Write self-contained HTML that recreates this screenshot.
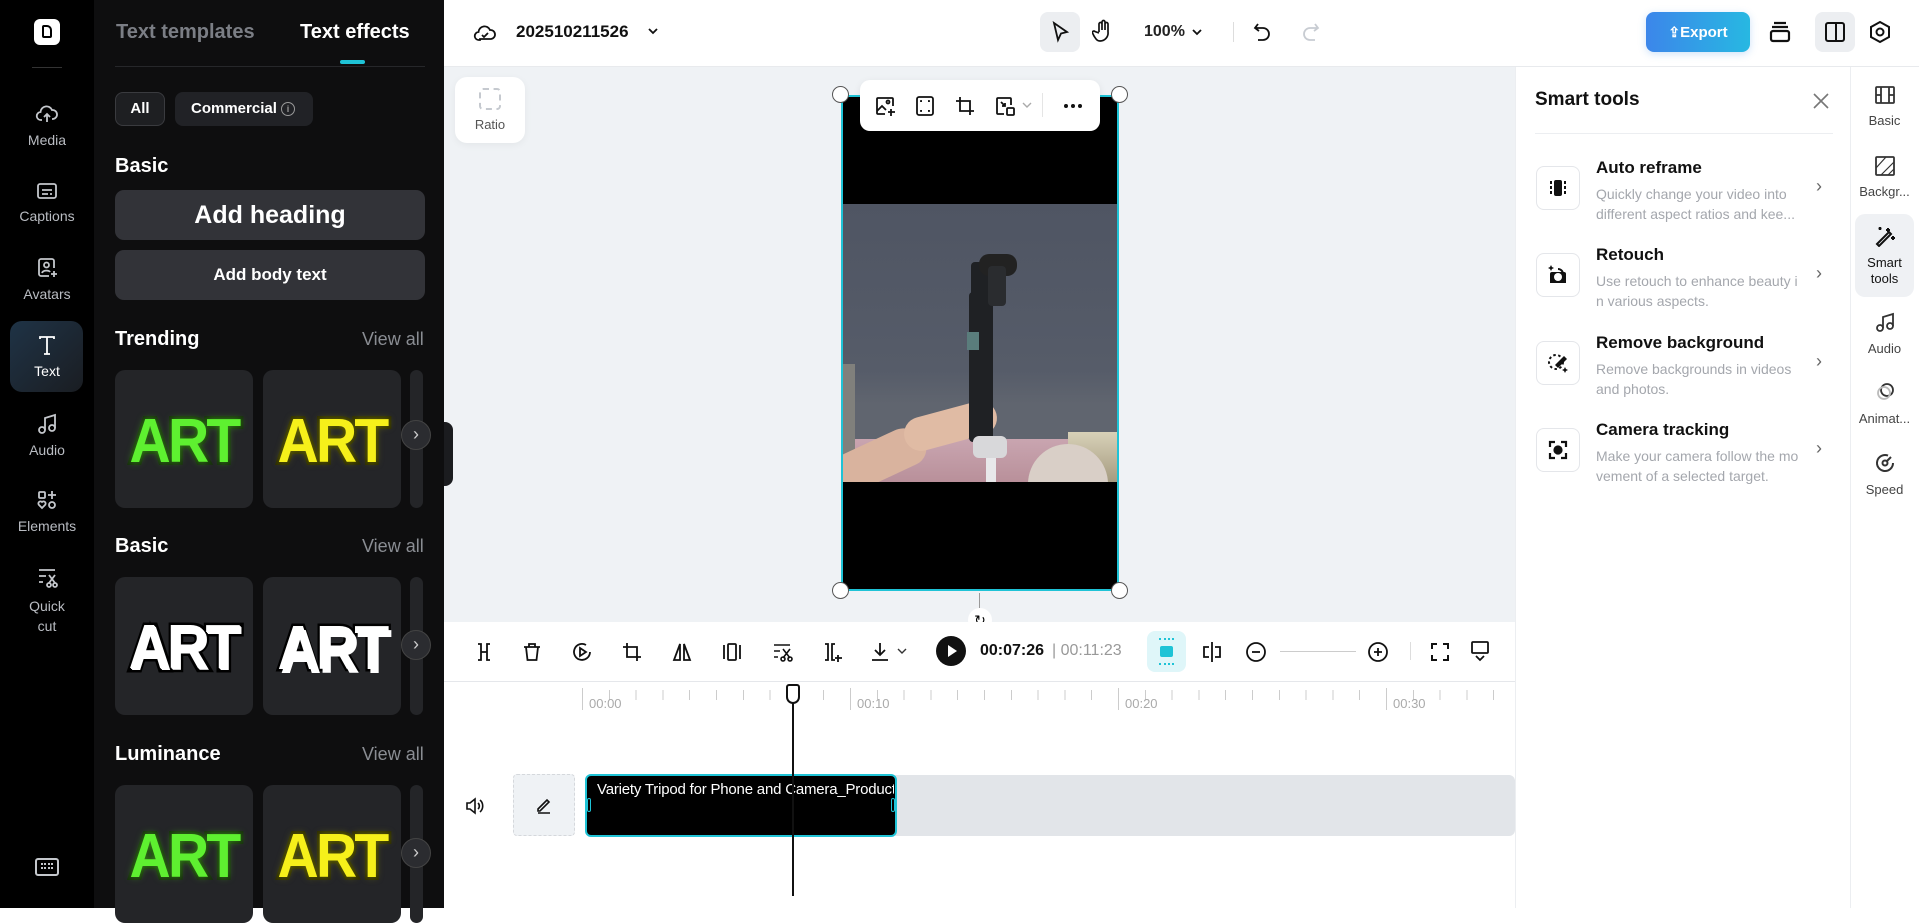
<!DOCTYPE html>
<html><head><meta charset="utf-8"><style>
*{box-sizing:border-box;margin:0;padding:0}
body{width:1919px;height:908px;overflow:hidden;font-family:"Liberation Sans",sans-serif;background:#fff;position:relative}
.a{position:absolute}
.nav{left:0;top:0;width:94px;height:908px;background:#000}
.ni{position:absolute;left:0;width:94px;text-align:center;color:#b9bcc2;font-size:14px}
.ni svg{display:block;margin:0 auto 6px}
.panel{left:94px;top:0;width:350px;height:908px;background:#0e0e0f}
.card{position:absolute;width:138px;height:138px;background:#242528;border-radius:10px;overflow:hidden}
.art{position:absolute;left:0;right:0;top:36px;text-align:center;font-size:62px;font-weight:bold;letter-spacing:-3px;font-family:"Liberation Sans",sans-serif;paint-order:stroke fill;transform:scaleX(.92)}
.g{color:#5ef030;-webkit-text-stroke:6px #17300c;text-shadow:0 0 8px #3c8a20}
.y{color:#f6f01a;-webkit-text-stroke:6px #2e2e00;text-shadow:0 0 8px #6a6a10}
.w1{color:#fff;-webkit-text-stroke:7px #000;text-shadow:0 0 0 #fff,1px 1px 0 #fff,-1px -1px 0 #fff}
.w2{color:#fff;-webkit-text-stroke:5px #000;text-shadow:3px 4px 0 #fff}
.arr{position:absolute;left:401px;width:30px;height:30px;border-radius:50%;background:#2b2c30;border:1px solid #444;color:#ccc;text-align:center;line-height:27px;font-size:18px}
.hd{position:absolute;left:115px;color:#fff;font-weight:bold;font-size:20px}
.va{position:absolute;right:21px;color:#8a8d93;font-size:18px}
.ti{position:absolute;left:1515px;width:335px;height:88px}
.ib{position:absolute;left:21px;top:0;width:44px;height:44px;border:1px solid #e4e6ea;border-radius:8px;display:flex;align-items:center;justify-content:center}
.tt{position:absolute;left:81px;top:-8px;font-size:17px;font-weight:bold;color:#111}
.td{position:absolute;left:81px;top:18px;width:210px;font-size:14px;line-height:20px;color:#a4a7ad}
.ch{position:absolute;left:301px;top:10px;color:#666;font-size:18px}
.ri{position:absolute;left:1850px;width:69px;text-align:center;font-size:13px;color:#444}
.ri svg{display:block;margin:0 auto 8px}
.tb svg{position:absolute;top:641px}
</style></head><body>
<div class="a nav">
 <div class="a" style="left:34px;top:19px;width:26px;height:26px;background:#fff;border-radius:6px"><div class="a" style="left:8px;top:6px;width:10px;height:13px;border:2.5px solid #000;border-radius:2px 5px 2px 2px"></div></div>
 <div class="a" style="left:32px;top:67px;width:30px;height:1px;background:#333"></div>
 <div class="ni" style="top:102px"><svg width="24" height="24" viewBox="0 0 24 24" fill="none" stroke="#c4c7cc" stroke-width="1.8"><path d="M7 18H6a4 4 0 0 1-.5-8A6 6 0 0 1 17 8a4.5 4.5 0 0 1 1 9h-1M12 20v-8M9 15l3-3 3 3"/></svg>Media</div>
 <div class="ni" style="top:180px"><svg width="24" height="22" viewBox="0 0 24 22" fill="none" stroke="#c4c7cc" stroke-width="1.8"><rect x="3" y="4" width="18" height="14" rx="2"/><path d="M7 10h10M7 14h6M15 14h2"/></svg>Captions</div>
 <div class="ni" style="top:256px"><svg width="24" height="24" viewBox="0 0 24 24" fill="none" stroke="#c4c7cc" stroke-width="1.8"><path d="M14 20H6a2 2 0 0 1-2-2V5a2 2 0 0 1 2-2h11a2 2 0 0 1 2 2v7"/><circle cx="11.5" cy="9" r="2.5"/><path d="M7 17c1-3 7-3 8-1M19 15v6M16 18h6"/></svg>Avatars</div>
 <div class="a" style="left:10px;top:321px;width:73px;height:71px;border-radius:12px;background:linear-gradient(135deg,#1f3346,#1a1d22)"></div>
 <div class="ni" style="top:333px;color:#fff"><svg width="24" height="24" viewBox="0 0 24 24" fill="none" stroke="#fff" stroke-width="1.8"><path d="M5 6V4h14v2M12 4v17M9 21h6"/></svg>Text</div>
 <div class="ni" style="top:412px"><svg width="24" height="24" viewBox="0 0 24 24" fill="none" stroke="#c4c7cc" stroke-width="1.8"><circle cx="7" cy="18" r="3"/><circle cx="17" cy="16" r="3"/><path d="M10 18V6l10-3v13"/></svg>Audio</div>
 <div class="ni" style="top:488px"><svg width="24" height="24" viewBox="0 0 24 24" fill="none" stroke="#c4c7cc" stroke-width="1.8"><rect x="4" y="4" width="6" height="6" rx="1"/><path d="M17 3v8M13 7h8M7 20l-3-3a2 2 0 0 1 3-3 2 2 0 0 1 3 3z"/><circle cx="17" cy="17" r="3"/></svg>Elements</div>
 <div class="ni" style="top:566px;line-height:20px"><svg width="24" height="24" viewBox="0 0 24 24" fill="none" stroke="#c4c7cc" stroke-width="1.8"><path d="M4 4h16M4 10h7M4 16h4M14 9l6 8M20 9l-6 8"/><circle cx="14" cy="19" r="2"/><circle cx="20" cy="19" r="2"/></svg>Quick<br>cut</div>
 <div class="a" style="left:35px;top:858px;width:24px;height:18px;border:2px solid #c4c7cc;border-radius:3px"><div class="a" style="left:4px;top:3px;width:12px;height:6px;border-top:2px dotted #c4c7cc;border-bottom:2px dotted #c4c7cc"></div></div>
</div>
<div class="a panel">
 <div class="a" style="left:22px;top:21px;color:#7b7e85;font-size:20px;font-weight:bold">Text templates</div>
 <div class="a" style="left:206px;top:21px;color:#fff;font-size:20px;font-weight:bold">Text effects</div>
 <div class="a" style="left:246px;top:60px;width:25px;height:4px;background:#1fc3d6;border-radius:2px"></div>
 <div class="a" style="left:21px;top:66px;width:310px;height:1px;background:#26272a"></div>
 <div class="a" style="left:21px;top:92px;width:50px;height:34px;border:1px solid #3a3b3f;background:#1e1f22;border-radius:8px;color:#fff;font-size:15px;font-weight:bold;text-align:center;line-height:32px">All</div>
 <div class="a" style="left:81px;top:92px;width:138px;height:34px;background:#212226;border-radius:8px;color:#fff;font-size:15px;font-weight:bold;line-height:34px;padding-left:16px">Commercial <span style="display:inline-block;width:14px;height:14px;border:1.3px solid #999;border-radius:50%;font-size:9px;line-height:12px;text-align:center;color:#999;vertical-align:1px">i</span></div>
</div>
<div class="hd" style="top:155px">Basic</div>
<div class="a" style="left:115px;top:190px;width:310px;height:50px;background:#323338;border-radius:9px;color:#fff;font-size:25px;font-weight:bold;text-align:center;line-height:50px">Add heading</div>
<div class="a" style="left:115px;top:250px;width:310px;height:50px;background:#323338;border-radius:9px;color:#fff;font-size:17px;font-weight:bold;text-align:center;line-height:50px">Add body text</div>
<div class="hd" style="top:328px">Trending</div><div class="va" style="top:329px;left:362px">View all</div>
<div class="card" style="left:115px;top:370px"><div class="art g">ART</div></div>
<div class="card" style="left:263px;top:370px"><div class="art y">ART</div></div>
<div class="card" style="left:410px;top:370px;width:13px"></div>
<div class="arr" style="top:420px">›</div>
<div class="hd" style="top:535px">Basic</div><div class="va" style="top:536px;left:362px">View all</div>
<div class="card" style="left:115px;top:577px"><div class="art w1">ART</div></div>
<div class="card" style="left:263px;top:577px"><div class="art w2">ART</div></div>
<div class="card" style="left:410px;top:577px;width:13px"></div>
<div class="arr" style="top:630px">›</div>
<div class="hd" style="top:743px">Luminance</div><div class="va" style="top:744px;left:362px">View all</div>
<div class="card" style="left:115px;top:785px"><div class="art g">ART</div></div>
<div class="card" style="left:263px;top:785px"><div class="art y">ART</div></div>
<div class="card" style="left:410px;top:785px;width:13px"></div>
<div class="arr" style="top:838px">›</div>
<div class="a" style="left:444px;top:0;width:1475px;height:67px;background:#fff;border-bottom:1px solid #e8eaed"></div>
<svg class="a" style="left:473px;top:21px" width="24" height="22" viewBox="0 0 24 22" fill="none" stroke="#111" stroke-width="1.8"><path d="M7 19H6a4 4 0 0 1-.5-8A6 6 0 0 1 17 9a4.5 4.5 0 0 1 1 9h-11z"/><path d="M9 14l2 2 4-4"/></svg>
<div class="a" style="left:516px;top:22px;font-size:17px;font-weight:bold;color:#111">202510211526</div>
<svg class="a" style="left:647px;top:27px" width="12" height="8" viewBox="0 0 12 8" fill="none" stroke="#111" stroke-width="1.8"><path d="M2 2l4 4 4-4"/></svg>
<div class="a" style="left:1040px;top:12px;width:40px;height:40px;background:#eceef1;border-radius:8px"></div>
<svg class="a" style="left:1050px;top:21px" width="20" height="22" viewBox="0 0 20 22" fill="none" stroke="#111" stroke-width="1.8"><path d="M4 2l13 9-6 1.5L8 19z"/></svg>
<svg class="a" style="left:1092px;top:19px" width="22" height="24" viewBox="0 0 22 24" fill="none" stroke="#111" stroke-width="1.7"><path d="M7 13V5a1.5 1.5 0 0 1 3 0v6V3a1.5 1.5 0 0 1 3 0v8V5a1.5 1.5 0 0 1 3 0v8a8 8 0 0 1-8 9c-3 0-4-2-6-5l-1.5-3a1.5 1.5 0 0 1 2.5-1.5L7 14"/></svg>
<div class="a" style="left:1144px;top:23px;font-size:16px;font-weight:bold;color:#222">100%</div>
<svg class="a" style="left:1191px;top:28px" width="12" height="8" viewBox="0 0 12 8" fill="none" stroke="#111" stroke-width="1.8"><path d="M2 2l4 4 4-4"/></svg>
<div class="a" style="left:1233px;top:22px;width:1px;height:20px;background:#ddd"></div>
<svg class="a" style="left:1252px;top:21px" width="20" height="22" viewBox="0 0 20 22" fill="none" stroke="#111" stroke-width="1.8"><path d="M6 3L3 7l4 3M3 7h8a6 6 0 0 1 0 12H6"/></svg>
<svg class="a" style="left:1301px;top:21px" width="20" height="22" viewBox="0 0 20 22" fill="none" stroke="#c8ccd2" stroke-width="1.8"><path d="M14 3l3 4-4 3M17 7H9a6 6 0 0 0 0 12h5"/></svg>
<div class="a" style="left:1646px;top:12px;width:104px;height:40px;border-radius:8px;background:linear-gradient(90deg,#3c86ea,#27b8e2);color:#fff;font-weight:bold;font-size:15px;line-height:40px;text-align:center;box-shadow:0 2px 8px rgba(60,140,230,.25)"><span style="font-size:14px">⇪</span>Export</div>
<svg class="a" style="left:1768px;top:20px" width="24" height="24" viewBox="0 0 24 24" fill="none" stroke="#111" stroke-width="2.2"><path d="M6 3h12M4 7h16"/><rect x="3" y="11" width="18" height="10" rx="2"/></svg>
<div class="a" style="left:1815px;top:12px;width:40px;height:40px;background:#eceef1;border-radius:8px"></div>
<svg class="a" style="left:1823px;top:20px" width="24" height="24" viewBox="0 0 24 24" fill="none" stroke="#111" stroke-width="2"><rect x="3" y="3" width="18" height="18" rx="2"/><path d="M13 3v18"/></svg>
<svg class="a" style="left:1868px;top:20px" width="24" height="24" viewBox="0 0 24 24" fill="none" stroke="#111" stroke-width="2"><path d="M12 2l9 5v10l-9 5-9-5V7z"/><circle cx="12" cy="12" r="3.5"/></svg>
<div class="a" style="left:444px;top:67px;width:1071px;height:555px;background:#eff2f5"></div>
<div class="a" style="left:455px;top:77px;width:70px;height:66px;background:#fff;border-radius:12px;box-shadow:0 2px 8px rgba(0,0,0,.05)"><div class="a" style="left:24px;top:11px;width:22px;height:22px;border:2px dashed #c5c9cf;border-radius:4px"></div><div class="a" style="left:0;width:70px;top:40px;text-align:center;font-size:13px;color:#555">Ratio</div></div>
<div class="a" style="left:841px;top:95px;width:278px;height:496px;background:#000;border:2px solid #1fc3d6"></div>
<div class="a" style="left:843px;top:204px;width:274px;height:278px;overflow:hidden;background:linear-gradient(180deg,#4f5563 0%,#565c69 60%,#60656f 72%)">
 <div class="a" style="left:0;top:235px;width:274px;height:45px;background:linear-gradient(180deg,#c9a5b0,#b88f99)"></div>
 <div class="a" style="left:225px;top:228px;width:49px;height:50px;background:linear-gradient(#d8d1b8,#a59b80)"></div>
 <div class="a" style="left:185px;top:240px;width:80px;height:50px;background:#d9cfc7;border-radius:40px 40px 0 0"></div>
 <div class="a" style="left:0;top:160px;width:12px;height:118px;background:#80807c"></div>
 <div class="a" style="left:-10px;top:235px;width:95px;height:40px;background:#d9b39e;border-radius:0 40px 30px 0;transform:rotate(-25deg)"></div>
 <div class="a" style="left:60px;top:205px;width:95px;height:34px;background:#e0bba4;border-radius:20px;transform:rotate(-15deg)"></div>
 <div class="a" style="left:128px;top:58px;width:22px;height:90px;background:#1f2124;border-radius:4px"></div>
 <div class="a" style="left:126px;top:88px;width:24px;height:150px;background:#1f2124;border-radius:4px"></div>
 <div class="a" style="left:136px;top:50px;width:38px;height:22px;background:#222;border-radius:10px"></div>
 <div class="a" style="left:145px;top:62px;width:18px;height:40px;background:#2a2c2f;border-radius:4px"></div>
 <div class="a" style="left:124px;top:128px;width:12px;height:18px;background:#5a7d7c"></div>
 <div class="a" style="left:143px;top:240px;width:10px;height:40px;background:#e8e8ea"></div>
 <div class="a" style="left:130px;top:232px;width:34px;height:22px;background:#d8d8da;border-radius:6px"></div>
</div>
<div class="a" style="left:860px;top:80px;width:240px;height:51px;background:#fff;border-radius:10px;box-shadow:0 2px 8px rgba(0,0,0,.08)">
 <svg class="a" style="left:14px;top:15px" width="22" height="22" viewBox="0 0 22 22" fill="none" stroke="#111" stroke-width="1.8"><path d="M11 19H4a1 1 0 0 1-1-1V4a1 1 0 0 1 1-1h14a1 1 0 0 1 1 1v7M3 16l5-5 4 4M17 14v7M14 17h7"/><circle cx="14" cy="7" r="1.5"/></svg>
 <svg class="a" style="left:54px;top:15px" width="22" height="22" viewBox="0 0 22 22" fill="none" stroke="#111" stroke-width="1.8"><rect x="3" y="2" width="16" height="18" rx="2"/><path d="M7 7V6h1M15 7V6h-1M7 15v1h1M15 15v1h-1"/></svg>
 <svg class="a" style="left:94px;top:15px" width="22" height="22" viewBox="0 0 22 22" fill="none" stroke="#111" stroke-width="1.8"><path d="M6 2v14h14M2 6h14v14"/></svg>
 <svg class="a" style="left:134px;top:15px" width="22" height="22" viewBox="0 0 22 22" fill="none" stroke="#111" stroke-width="1.8"><path d="M10 19H4a1 1 0 0 1-1-1V4a1 1 0 0 1 1-1h12a1 1 0 0 1 1 1v6M7 7l4 4M11 8v3H8"/><rect x="13" y="13" width="7" height="7" rx="1"/></svg>
 <svg class="a" style="left:162px;top:22px" width="10" height="7" viewBox="0 0 10 7" fill="none" stroke="#aaa" stroke-width="1.4"><path d="M1 1l4 4 4-4"/></svg>
 <div class="a" style="left:182px;top:13px;width:1px;height:24px;background:#e5e5e5"></div>
 <div class="a" style="left:204px;top:24px;width:4px;height:4px;border-radius:50%;background:#111;box-shadow:7px 0 0 #111,14px 0 0 #111"></div>
</div>
<div class="a" style="left:832px;top:86px;width:17px;height:17px;border-radius:50%;background:#fff;border:1px solid #555"></div>
<div class="a" style="left:1111px;top:86px;width:17px;height:17px;border-radius:50%;background:#fff;border:1px solid #555"></div>
<div class="a" style="left:832px;top:582px;width:17px;height:17px;border-radius:50%;background:#fff;border:1px solid #555"></div>
<div class="a" style="left:1111px;top:582px;width:17px;height:17px;border-radius:50%;background:#fff;border:1px solid #555"></div>
<div class="a" style="left:979px;top:593px;width:1px;height:15px;background:#999"></div>
<div class="a" style="left:968px;top:608px;width:24px;height:24px;border-radius:50%;background:#fff;text-align:center;font-size:14px;line-height:24px">↻</div>
<div class="a" style="left:444px;top:422px;width:9px;height:64px;background:#1b1c1f;border-radius:0 8px 8px 0"></div>
<div class="a" style="left:444px;top:622px;width:1071px;height:60px;background:#fff;border-bottom:1px solid #e5e7eb"></div>
<div class="tb">
<svg class="a" style="left:473px" width="22" height="22" viewBox="0 0 22 22" fill="none" stroke="#111" stroke-width="1.8"><path d="M5 3h3v16H5M17 3h-3v16h3M8 11h6"/></svg>
<svg class="a" style="left:521px" width="22" height="22" viewBox="0 0 22 22" fill="none" stroke="#111" stroke-width="1.8"><path d="M3 6h16M8 6V3h6v3M5 6l1.5 13h9L17 6"/></svg>
<svg class="a" style="left:571px" width="22" height="22" viewBox="0 0 22 22" fill="none" stroke="#111" stroke-width="1.8"><path d="M19 11A8 8 0 1 1 15 4"/><path d="M9 7l6 4-6 4z"/></svg>
<svg class="a" style="left:621px" width="22" height="22" viewBox="0 0 22 22" fill="none" stroke="#111" stroke-width="1.8"><path d="M6 2v14h14M2 6h14v14"/></svg>
<svg class="a" style="left:671px" width="22" height="22" viewBox="0 0 22 22" fill="none" stroke="#111" stroke-width="1.8"><path d="M9 3L3 19h6zM13 3l6 16h-6z"/></svg>
<svg class="a" style="left:721px" width="22" height="22" viewBox="0 0 22 22" fill="none" stroke="#111" stroke-width="1.8"><rect x="7" y="3" width="8" height="16" rx="1"/><path d="M3 4v14M19 4v14"/></svg>
<svg class="a" style="left:771px" width="22" height="22" viewBox="0 0 22 22" fill="none" stroke="#111" stroke-width="1.6"><path d="M3 4h16M3 10h6M3 16h4M12 8l7 9M19 8l-7 9"/><circle cx="12" cy="18" r="2"/><circle cx="19" cy="18" r="2"/></svg>
<svg class="a" style="left:821px" width="22" height="22" viewBox="0 0 22 22" fill="none" stroke="#111" stroke-width="1.8"><path d="M4 3h3v16H4M14 3h-3v16h3M17 14v7M14 17h7"/></svg>
<svg class="a" style="left:869px" width="22" height="22" viewBox="0 0 22 22" fill="none" stroke="#111" stroke-width="1.8"><path d="M11 2v12M6 9l5 5 5-5M3 19h16"/></svg>
</div>
<svg class="a" style="left:897px;top:648px" width="10" height="7" viewBox="0 0 10 7" fill="none" stroke="#333" stroke-width="1.4"><path d="M1 1l4 4 4-4"/></svg>
<div class="a" style="left:936px;top:636px;width:30px;height:30px;border-radius:50%;background:#111"><div class="a" style="left:12px;top:9px;width:0;height:0;border-left:9px solid #fff;border-top:6px solid transparent;border-bottom:6px solid transparent"></div></div>
<div class="a" style="left:980px;top:642px;font-size:16px;font-weight:bold;color:#111">00:07:26</div>
<div class="a" style="left:1052px;top:642px;font-size:16px;color:#999">| 00:11:23</div>
<div class="a" style="left:1147px;top:631px;width:39px;height:41px;background:#dff6f9;border-radius:8px"><div class="a" style="left:13px;top:15px;width:13px;height:11px;background:#1fc3d6;border-radius:2px"></div><div class="a" style="left:12px;top:7px;width:15px;height:27px;border-top:2px dotted #1fc3d6;border-bottom:2px dotted #1fc3d6"></div></div>
<svg class="a" style="left:1200px;top:640px" width="24" height="24" viewBox="0 0 24 24" fill="none" stroke="#111" stroke-width="1.8"><path d="M12 2v20M9 7H4v10h5M15 7h5v10h-5"/></svg>
<svg class="a" style="left:1244px;top:640px" width="24" height="24" viewBox="0 0 24 24" fill="none" stroke="#111" stroke-width="1.8"><circle cx="12" cy="12" r="9"/><path d="M8 12h8"/></svg>
<div class="a" style="left:1280px;top:651px;width:76px;height:1px;background:#ccc"></div>
<svg class="a" style="left:1366px;top:640px" width="24" height="24" viewBox="0 0 24 24" fill="none" stroke="#111" stroke-width="1.8"><circle cx="12" cy="12" r="9"/><path d="M8 12h8M12 8v8"/></svg>
<div class="a" style="left:1410px;top:642px;width:1px;height:18px;background:#ddd"></div>
<svg class="a" style="left:1429px;top:641px" width="22" height="22" viewBox="0 0 22 22" fill="none" stroke="#111" stroke-width="2"><path d="M3 8V3h5M14 3h5v5M19 14v5h-5M8 19H3v-5"/></svg>
<svg class="a" style="left:1469px;top:639px" width="22" height="24" viewBox="0 0 22 24" fill="none" stroke="#111" stroke-width="1.8"><rect x="3" y="3" width="16" height="11" rx="1"/><path d="M7 17l4 4 4-4"/></svg>
<div class="a" style="left:444px;top:683px;width:1071px;height:225px;background:#fff"></div>
<div class="a" style="left:582px;top:690px;width:920px;height:10px;background:repeating-linear-gradient(90deg,#ccc 0 1px,transparent 1px 26.8px)"></div>
<div class="a" style="left:582px;top:688px;width:1px;height:22px;background:#ccc"></div>
<div class="a" style="left:850px;top:688px;width:1px;height:22px;background:#ccc"></div>
<div class="a" style="left:1118px;top:688px;width:1px;height:22px;background:#ccc"></div>
<div class="a" style="left:1386px;top:688px;width:1px;height:22px;background:#ccc"></div>
<div class="a" style="left:589px;top:696px;font-size:13px;color:#aaa">00:00</div>
<div class="a" style="left:857px;top:696px;font-size:13px;color:#aaa">00:10</div>
<div class="a" style="left:1125px;top:696px;font-size:13px;color:#aaa">00:20</div>
<div class="a" style="left:1393px;top:696px;font-size:13px;color:#aaa">00:30</div>
<svg class="a" style="left:464px;top:795px" width="22" height="22" viewBox="0 0 22 22" fill="none" stroke="#111" stroke-width="1.6"><path d="M3 8h3l5-4v14l-5-4H3zM14 8a4 4 0 0 1 0 6M16 5a8 8 0 0 1 0 12"/></svg>
<div class="a" style="left:513px;top:774px;width:62px;height:62px;background:#eff2f5;border:1px dashed #d5d8dc;border-radius:4px"><svg class="a" style="left:20px;top:20px" width="20" height="20" viewBox="0 0 20 20" fill="none" stroke="#111" stroke-width="1.6"><path d="M4 14l9-9 2 2-9 9H4zM4 18h12"/></svg></div>
<div class="a" style="left:895px;top:775px;width:620px;height:61px;background:#e2e5e9;border-radius:0 6px 6px 0"></div>
<div class="a" style="left:585px;top:774px;width:312px;height:63px;background:#000;border:2.5px solid #1fc3d6;border-radius:6px"><div class="a" style="left:10px;top:5px;color:#fff;font-size:15px;white-space:nowrap;overflow:hidden;width:297px;letter-spacing:-.2px">Variety Tripod for Phone and Camera_Product</div><div class="a" style="left:0;top:22px;width:4px;height:14px;border:1.5px solid #1fc3d6;border-radius:2px"></div><div class="a" style="right:0;top:22px;width:4px;height:14px;border:1.5px solid #1fc3d6;border-radius:2px"></div></div>
<div class="a" style="left:792px;top:684px;width:2px;height:212px;background:#111"></div>
<div class="a" style="left:786px;top:684px;width:14px;height:20px;background:#fff;border:2px solid #111;border-radius:3px 3px 7px 7px"></div>
<div class="a" style="left:1515px;top:67px;width:335px;height:841px;background:#fff;border-left:1px solid #eceef1"></div>
<div class="a" style="left:1535px;top:89px;font-size:19px;font-weight:bold;color:#111">Smart tools</div>
<svg class="a" style="left:1812px;top:92px" width="18" height="18" viewBox="0 0 18 18" stroke="#777" stroke-width="1.6"><path d="M2 2l14 14M16 2L2 16"/></svg>
<div class="a" style="left:1535px;top:133px;width:298px;height:1px;background:#eceef1"></div>
<div class="ti" style="top:166px"><div class="ib"><svg width="24" height="24" viewBox="0 0 24 24"><rect x="8" y="4" width="8" height="16" rx="2" fill="#111"/><path d="M5 5v14M19 5v14" stroke="#111" stroke-width="2" stroke-dasharray="3 2"/></svg></div><div class="tt">Auto reframe</div><div class="td">Quickly change your video into different aspect ratios and kee...</div><div class="ch">›</div></div>
<div class="ti" style="top:253px"><div class="ib"><svg width="26" height="26" viewBox="0 0 26 26"><path d="M7 10h12a2 2 0 0 1 2 2v9H5v-9a2 2 0 0 1 2-2z" fill="#111"/><circle cx="13" cy="15" r="4" fill="#fff"/><path d="M13 7a5 5 0 0 1 5 5" stroke="#111" stroke-width="2" fill="none"/><path d="M6 3l1 2 2 1-2 1-1 2-1-2-2-1 2-1z" fill="#111"/></svg></div><div class="tt">Retouch</div><div class="td">Use retouch to enhance beauty i n various aspects.</div><div class="ch">›</div></div>
<div class="ti" style="top:341px"><div class="ib"><svg width="26" height="26" viewBox="0 0 26 26"><circle cx="11" cy="12" r="7" stroke="#111" stroke-width="2" fill="none" stroke-dasharray="2.5 2.5"/><path d="M19 6l3 3-9 9-3-3z" fill="#111"/><path d="M20 17l1 2 2 1-2 1-1 2-1-2-2-1 2-1z" fill="#111"/></svg></div><div class="tt">Remove background</div><div class="td">Remove backgrounds in videos and photos.</div><div class="ch">›</div></div>
<div class="ti" style="top:428px"><div class="ib"><svg width="24" height="24" viewBox="0 0 24 24" fill="none" stroke="#111" stroke-width="2.2"><path d="M4 9V4h5M15 4h5v5M20 15v5h-5M9 20H4v-5"/><circle cx="12" cy="12" r="3.5" fill="#111"/></svg></div><div class="tt">Camera tracking</div><div class="td">Make your camera follow the mo vement of a selected target.</div><div class="ch">›</div></div>
<div class="a" style="left:1850px;top:67px;width:69px;height:841px;background:#fff;border-left:1px solid #eceef1"></div>
<div class="ri" style="top:85px"><svg width="22" height="20" viewBox="0 0 22 20" fill="none" stroke="#333" stroke-width="1.8"><rect x="2" y="2" width="18" height="16" rx="1"/><path d="M7 2v16M15 2v16M2 10h5M15 10h5"/></svg>Basic</div>
<div class="ri" style="top:156px"><svg width="22" height="20" viewBox="0 0 22 20" fill="none" stroke="#333" stroke-width="1.8"><rect x="2" y="1" width="18" height="18" rx="1"/><path d="M2 12l10-11M7 19L20 6M14 19l6-6" stroke-width="1.2"/></svg>Backgr...</div>
<div class="a" style="left:1855px;top:214px;width:59px;height:83px;background:#eff1f4;border-radius:10px"></div>
<div class="ri" style="top:225px;line-height:16px;color:#111"><svg width="22" height="22" viewBox="0 0 22 22" fill="none" stroke="#111" stroke-width="2"><path d="M3 19L15 7l2 2L5 21zM14 3v4M12 5h4M19 11v4M17 13h4M6 2v3M4.5 3.5h3"/></svg>Smart<br>tools</div>
<div class="ri" style="top:311px"><svg width="22" height="22" viewBox="0 0 22 22" fill="none" stroke="#333" stroke-width="1.8"><circle cx="6" cy="17" r="3"/><circle cx="16" cy="15" r="3"/><path d="M9 17V6l10-3v12"/></svg>Audio</div>
<div class="ri" style="top:381px"><svg width="22" height="22" viewBox="0 0 22 22" fill="none" stroke="#333" stroke-width="1.8"><circle cx="13" cy="9" r="6"/><circle cx="10" cy="12" r="6" stroke="#bbb"/></svg>Animat...</div>
<div class="ri" style="top:452px"><svg width="22" height="22" viewBox="0 0 22 22" fill="none" stroke="#333" stroke-width="2"><path d="M19 11a8 8 0 1 1-5-7.4"/><circle cx="11" cy="11" r="2.5"/><path d="M12.5 9.5L17 5"/></svg>Speed</div>
</body></html>
